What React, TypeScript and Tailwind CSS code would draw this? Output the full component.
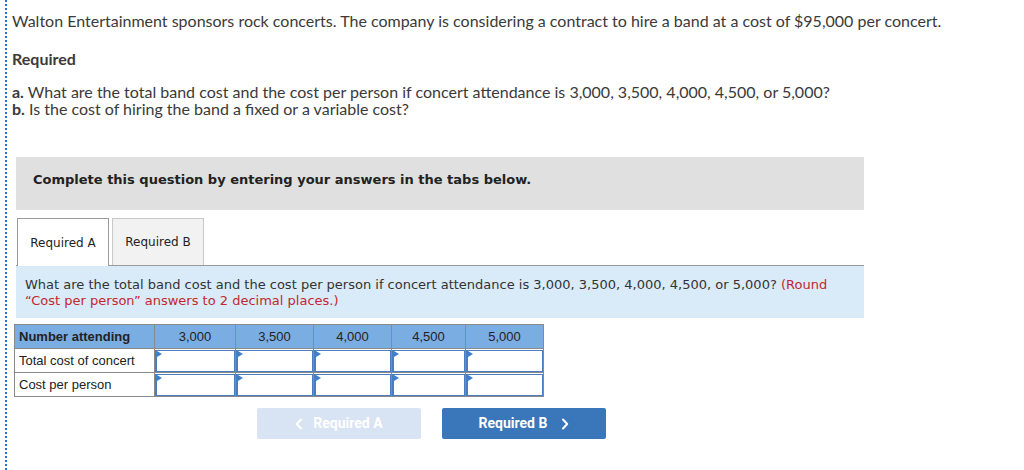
import React from 'react';

const cols = [
  { label: '3,000', w: 'w-[81px]' },
  { label: '3,500', w: 'w-[78px]' },
  { label: '4,000', w: 'w-[78px]' },
  { label: '4,500', w: 'w-[74px]' },
  { label: '5,000', w: 'w-[78px]' },
];

const rows = ['Total cost of concert', 'Cost per person'];

const InputCell = () => (
  <td className="h-[24px] border border-[#8a8a8a] p-0">
    <div className="relative h-[22px] w-full border border-[#4a7dbd] border-l-2 bg-white">
      <span className="absolute left-0 top-0 h-0 w-0 border-y-[3px] border-l-[5px] border-y-transparent border-l-[#3f7fd0]" />
    </div>
  </td>
);

const Chevron = ({ dir }: { dir: 'left' | 'right' }) => (
  <svg width="8" height="12" viewBox="0 0 8 12" fill="none">
    <path
      d={dir === 'left' ? 'M6 1.5 1.8 6 6 10.5' : 'M2 1.5 6.2 6 2 10.5'}
      stroke="currentColor"
      strokeWidth="2"
      strokeLinecap="round"
      strokeLinejoin="round"
    />
  </svg>
);

export default function App() {
  return (
    <div className="h-[470px] w-[1024px] overflow-hidden bg-white">
      <div className="ml-[5px] h-full border-l-2 border-dotted border-[#2f73c6] pl-[5px] pt-[12px] text-[#3a3a3a] [font-family:Lato,'Open_Sans',sans-serif]">
        <p className="text-[16px] leading-[17px]">
          Walton Entertainment sponsors rock concerts. The company is considering a contract to hire a band at a cost of
          $95,000 per concert.
        </p>
        <p className="mt-[21px] text-[16px] font-bold leading-[17px]">Required</p>
        <p className="mt-[16px] text-[16px] leading-[17px]">
          <b>a.</b> What are the total band cost and the cost per person if concert attendance is 3,000, 3,500, 4,000,
          4,500, or 5,000?
        </p>
        <p className="text-[16px] leading-[17px]">
          <b>b.</b> Is the cost of hiring the band a fixed or a variable cost?
        </p>

        <div className="ml-[4px] mt-[40px] w-[848px] [font-family:'DejaVu_Sans',Verdana,sans-serif]">
          <div className="h-[53px] bg-[#e0e0e0] pl-[17px] pt-[15px] text-[13px] font-bold leading-[16px] text-[#222]">
            Complete this question by entering your answers in the tabs below.
          </div>

          <div className="mt-[8px] flex gap-[3px] pl-[1px]">
            <div className="relative z-10 -mb-px flex h-[48px] w-[92px] items-center justify-center border border-b-0 border-[#9a9a9a] bg-white text-[12px] text-[#222]">
              Required A
            </div>
            <div className="flex h-[47px] w-[92px] items-center justify-center border border-b-0 border-[#c8c8c8] bg-[#f2f2f2] text-[12px] text-[#222]">
              Required B
            </div>
          </div>

          <div className="h-[53px] border-t border-[#9a9a9a] bg-[#d9ebf9] pl-[9px] pr-[20px] pt-[11px] text-[13px] leading-[16px] text-[#333]">
            What are the total band cost and the cost per person if concert attendance is 3,000, 3,500, 4,000, 4,500, or
            5,000? <span className="text-[#c4262e]">(Round “Cost per person” answers to 2 decimal places.)</span>
          </div>
        </div>

        <table className="ml-[2px] mt-[6px] border-collapse text-[13px] [font-family:'Liberation_Sans',Arial,sans-serif]">
          <tbody>
            <tr className="h-[24px] bg-[#7aaee3] text-[#222]">
              <td className="w-[140px] border border-[#8a8a8a] px-[4px] font-bold">Number attending</td>
              {cols.map((c) => (
                <td key={c.label} className={`${c.w} border border-[#8a8a8a] text-center`}>
                  {c.label}
                </td>
              ))}
            </tr>
            {rows.map((r) => (
              <tr key={r} className="h-[24px]">
                <td className="border border-[#8a8a8a] px-[4px] text-[#222]">{r}</td>
                {cols.map((c) => (
                  <InputCell key={c.label} />
                ))}
              </tr>
            ))}
          </tbody>
        </table>

        <div className="ml-[245px] mt-[11px] flex gap-[21px] [font-family:Roboto,sans-serif]">
          <button className="flex h-[31px] w-[164px] items-center justify-center gap-[10px] rounded-[2px] bg-[#d8e4f3] text-[14px] font-bold text-white">
            <Chevron dir="left" />
            Required A
          </button>
          <button className="flex h-[31px] w-[164px] items-center justify-center gap-[14px] rounded-[2px] bg-[#3a76ba] text-[14px] font-bold text-white">
            Required B
            <Chevron dir="right" />
          </button>
        </div>
      </div>
    </div>
  );
}
